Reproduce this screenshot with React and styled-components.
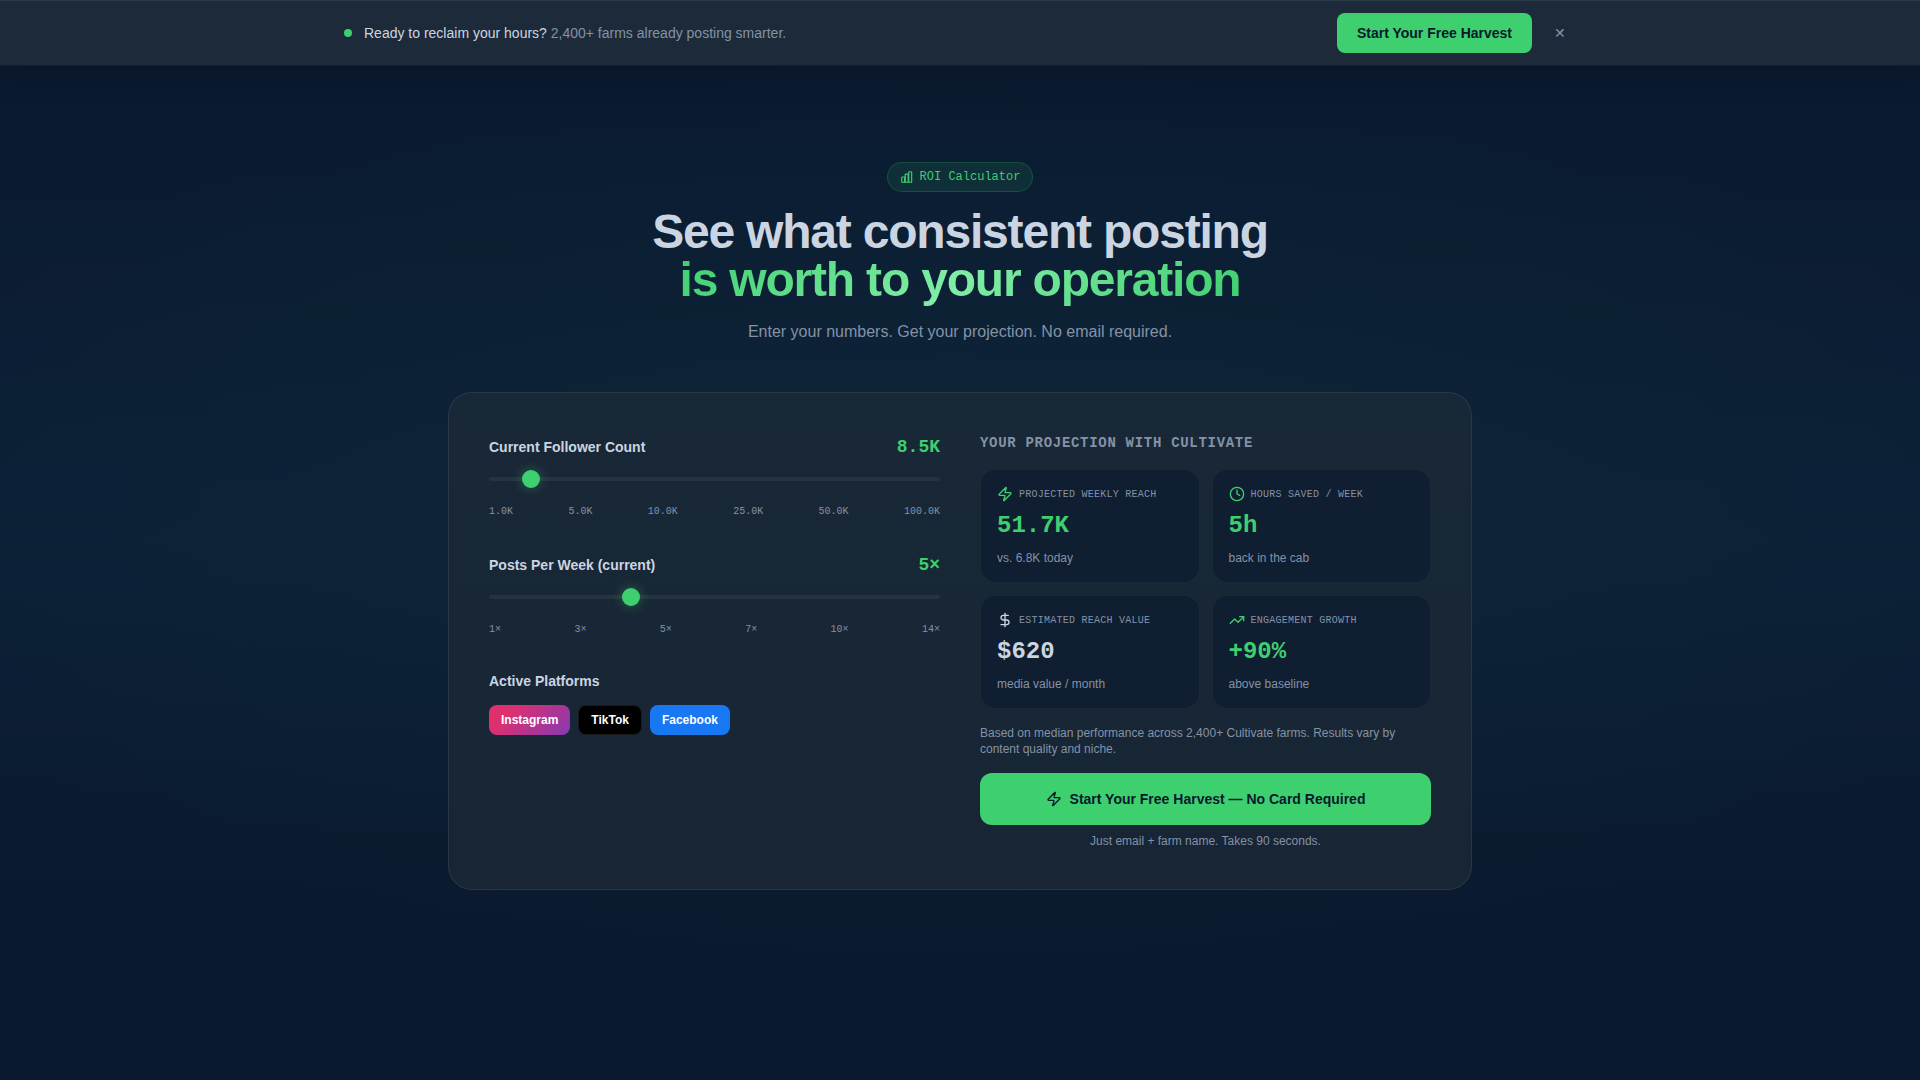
import { useState } from "react";
import styled, { createGlobalStyle, css } from "styled-components";
import { Clock, DollarSign, TrendingUp, Zap } from "lucide-react";

const GlobalStyle = createGlobalStyle`
  *, *::before, *::after {
    box-sizing: border-box;
  }
  body {
    margin: 0;
    background-color: #0a192f;
    color: #cbd5e1;
    font-family: "Liberation Sans", Arial, sans-serif;
    font-size: 16px;
    line-height: 24px;
  }
  button, input {
    font-family: inherit;
  }
  h1, h2, p {
    margin: 0;
  }
`;

const mono = css`
  font-family: "Liberation Mono", "Courier New", monospace;
`;

const Page = styled.div`
  min-height: 100vh;
  background:
    radial-gradient(ellipse 60% 45% at 50% 48%, rgba(62, 207, 110, 0.04) 0%, transparent 100%),
    linear-gradient(180deg, #0a192f 0%, #0c2037 50%, #0a192f 85%);
`;

const Banner = styled.header`
  position: relative;
  border-top: 1px solid #2b3a49;
  border-bottom: 1px solid #121f2d;
  background-color: #1d2a39;
  box-shadow: 0 8px 32px rgba(0, 0, 0, 0.2);
`;
const BannerInner = styled.div`
  display: flex;
  align-items: center;
  gap: 12px;
  max-width: 1280px;
  margin: 0 auto;
  padding: 12px 24px;
`;
const Dot = styled.span`
  width: 8px;
  height: 8px;
  border-radius: 50%;
  background-color: #3ecf6e;
`;
const BannerText = styled.p`
  flex: 1;
  font-size: 14px;
  line-height: 20px;
`;
const Muted = styled.span`
  color: #8492a6;
`;
const BannerButton = styled.button`
  height: 40px;
  padding: 0 20px;
  border: 0;
  border-radius: 8px;
  background-color: #3ecf6e;
  color: #0a192f;
  font-size: 14px;
  font-weight: 700;
  cursor: pointer;
`;
const CloseButton = styled.button`
  width: 32px;
  height: 32px;
  padding: 0;
  border: 0;
  background: none;
  color: #8492a6;
  font-size: 14px;
  cursor: pointer;
`;

const Section = styled.main`
  display: flex;
  flex-direction: column;
  align-items: center;
  padding: 96px 24px;
`;
const Pill = styled.div`
  ${mono}
  display: flex;
  align-items: center;
  gap: 6px;
  margin-bottom: 16px;
  padding: 6px 12px;
  border: 1px solid rgba(62, 207, 110, 0.2);
  border-radius: 15px;
  background-color: rgba(62, 207, 110, 0.1);
  color: #3ecf6e;
  font-size: 12px;
  line-height: 16px;
`;
const Title = styled.h1`
  margin-bottom: 16px;
  color: #cbd5e1;
  font-size: 48px;
  font-weight: 700;
  line-height: 48px;
  letter-spacing: -0.025em;
  text-align: center;
`;
const Highlight = styled.span`
  background: linear-gradient(135deg, #3ecf6e 0%, #80eda6 50%, #3ecf6e 100%);
  background-clip: text;
  color: transparent;
`;
const Subtitle = styled.p`
  margin-bottom: 48px;
  color: #8492a6;
`;

const Card = styled.div`
  display: grid;
  grid-template-columns: 1fr 1fr;
  gap: 40px;
  width: 100%;
  max-width: 1024px;
  padding: 40px;
  border: 1px solid rgba(255, 255, 255, 0.08);
  border-radius: 24px;
  background: linear-gradient(180deg, #192837 0%, #172534 100%);

  @media (max-width: 800px) {
    grid-template-columns: 1fr;
  }
`;
const Controls = styled.div`
  display: flex;
  flex-direction: column;
  gap: 32px;
`;
const FieldHead = styled.div`
  display: flex;
  align-items: center;
  justify-content: space-between;
  margin-bottom: 8px;
`;
const FieldLabel = styled.label`
  color: #cbd5e1;
  font-size: 14px;
  font-weight: 700;
  line-height: 20px;
`;
const FieldValue = styled.output`
  ${mono}
  color: #3ecf6e;
  font-size: 18px;
  font-weight: 700;
  line-height: 28px;
`;
const Range = styled.input`
  display: block;
  width: 100%;
  height: 20px;
  margin: 0;
  appearance: none;
  background: none;
  cursor: pointer;

  &::-webkit-slider-runnable-track {
    height: 4px;
    border-radius: 2px;
    background-color: #253341;
  }
  &::-webkit-slider-thumb {
    width: 18px;
    height: 18px;
    margin-top: -7px;
    appearance: none;
    border-radius: 50%;
    background-color: #3ecf6e;
    box-shadow: 0 0 12px rgba(62, 207, 110, 0.4);
  }
`;
const Ticks = styled.div`
  ${mono}
  display: flex;
  justify-content: space-between;
  margin-top: 15px;
  color: #8492a6;
  font-size: 10px;
  line-height: 15px;
`;
const GroupLabel = styled.div`
  margin-bottom: 12px;
  font-size: 14px;
  font-weight: 700;
  line-height: 24px;
`;
const Platforms = styled.div`
  display: flex;
  gap: 8px;
`;
const PlatformButton = styled.button`
  padding: 6px 12px;
  border: ${({ $border }) => $border || "0"};
  border-radius: 8px;
  background: ${({ $bg }) => $bg};
  color: #fff;
  font-size: 12px;
  font-weight: 700;
  line-height: 16px;
  cursor: pointer;
`;

const ResultsTitle = styled.h2`
  ${mono}
  margin-bottom: 16px;
  color: #8492a6;
  font-size: 14px;
  font-weight: 700;
  line-height: 20px;
  letter-spacing: 0.05em;
  text-transform: uppercase;
`;
const Stats = styled.div`
  display: grid;
  grid-template-columns: 1fr 1fr;
  gap: 12px;
  margin-bottom: 16px;
`;
const Stat = styled.div`
  display: flex;
  flex-direction: column;
  gap: 8px;
  padding: 16px;
  border: 1px solid rgba(255, 255, 255, 0.01);
  border-radius: 16px;
  background-color: #101e31;
  background-clip: padding-box;
`;
const StatHead = styled.div`
  ${mono}
  display: flex;
  align-items: center;
  gap: 6px;
  color: #8492a6;
  font-size: 10px;
  line-height: 15px;
  letter-spacing: 0.025em;
  text-transform: uppercase;

  svg {
    color: ${({ $color }) => $color};
  }
`;
const StatValue = styled.div`
  ${mono}
  color: ${({ $color }) => $color};
  font-size: 24px;
  font-weight: 700;
  line-height: 32px;
`;
const Small = styled.p`
  color: #8492a6;
  font-size: 12px;
  line-height: 16px;
  text-align: ${({ $center }) => ($center ? "center" : "left")};
`;
const CtaButton = styled.button`
  display: flex;
  align-items: center;
  justify-content: center;
  gap: 8px;
  width: 100%;
  margin: 16px 0 8px;
  padding: 16px;
  border: 0;
  border-radius: 12px;
  background-color: #3ecf6e;
  color: #0a192f;
  font-size: 14px;
  font-weight: 700;
  line-height: 20px;
  cursor: pointer;
`;

const GREEN = "#3ecf6e";
const LIGHT = "#cbd5e1";

const stats = [
  { icon: Zap, label: "Projected Weekly Reach", value: "51.7K", sub: "vs. 6.8K today", color: GREEN },
  { icon: Clock, label: "Hours Saved / Week", value: "5h", sub: "back in the cab", color: GREEN },
  { icon: DollarSign, label: "Estimated Reach Value", value: "$620", sub: "media value / month", color: LIGHT },
  { icon: TrendingUp, label: "Engagement Growth", value: "+90%", sub: "above baseline", color: GREEN },
];

const platforms = [
  { name: "Instagram", bg: "linear-gradient(135deg, #e1306c 0%, #dd3070 25%, #833ab4 100%)" },
  { name: "TikTok", bg: "#000", border: "1px solid rgba(255, 255, 255, 0.1)" },
  { name: "Facebook", bg: "#1877f2" },
];

const BarsIcon = () => (
  <svg width="14" height="14" viewBox="0 0 24 24" fill="none" stroke="currentColor" strokeWidth="2">
    <rect x="3" y="12" width="5" height="9" rx="1" />
    <rect x="9" y="7" width="5" height="14" rx="1" />
    <rect x="15" y="3" width="5" height="18" rx="1" />
  </svg>
);

const SliderField = ({ id, label, display, ticks, ...range }) => (
  <div>
    <FieldHead>
      <FieldLabel htmlFor={id}>{label}</FieldLabel>
      <FieldValue htmlFor={id}>{display}</FieldValue>
    </FieldHead>
    <Range id={id} type="range" {...range} />
    <Ticks>
      {ticks.map((tick) => (
        <span key={tick}>{tick}</span>
      ))}
    </Ticks>
  </div>
);

const App = () => {
  const [followers, setFollowers] = useState(8500);
  const [posts, setPosts] = useState(5);

  return (
    <>
      <GlobalStyle />
      <Page>
        <Banner>
          <BannerInner>
            <Dot />
            <BannerText>
              Ready to reclaim your hours? <Muted>2,400+ farms already posting smarter.</Muted>
            </BannerText>
            <BannerButton type="button">Start Your Free Harvest</BannerButton>
            <CloseButton type="button" aria-label="Dismiss">✕</CloseButton>
          </BannerInner>
        </Banner>
        <Section>
          <Pill>
            <BarsIcon />
            ROI Calculator
          </Pill>
          <Title>
            See what consistent posting
            <br />
            <Highlight>is worth to your operation</Highlight>
          </Title>
          <Subtitle>Enter your numbers. Get your projection. No email required.</Subtitle>
          <Card>
            <Controls>
              <SliderField
                id="followers"
                label="Current Follower Count"
                display={`${(followers / 1000).toFixed(1)}K`}
                ticks={["1.0K", "5.0K", "10.0K", "25.0K", "50.0K", "100.0K"]}
                min={1000}
                max={100000}
                step={500}
                value={followers}
                onChange={(e) => setFollowers(Number(e.target.value))}
              />
              <SliderField
                id="posts"
                label="Posts Per Week (current)"
                display={`${posts}×`}
                ticks={["1×", "3×", "5×", "7×", "10×", "14×"]}
                min={1}
                max={14}
                value={posts}
                onChange={(e) => setPosts(Number(e.target.value))}
              />
              <div role="group" aria-labelledby="platforms">
                <GroupLabel id="platforms">Active Platforms</GroupLabel>
                <Platforms>
                  {platforms.map(({ name, bg, border }) => (
                    <PlatformButton key={name} type="button" $bg={bg} $border={border}>
                      {name}
                    </PlatformButton>
                  ))}
                </Platforms>
              </div>
            </Controls>
            <div>
              <ResultsTitle>Your projection with Cultivate</ResultsTitle>
              <Stats>
                {stats.map(({ icon: Icon, label, value, sub, color }) => (
                  <Stat key={label}>
                    <StatHead $color={color}>
                      <Icon size={16} />
                      {label}
                    </StatHead>
                    <StatValue $color={color}>{value}</StatValue>
                    <Small>{sub}</Small>
                  </Stat>
                ))}
              </Stats>
              <Small>
                Based on median performance across 2,400+ Cultivate farms. Results vary by content quality and niche.
              </Small>
              <CtaButton type="button">
                <Zap size={16} />
                Start Your Free Harvest — No Card Required
              </CtaButton>
              <Small $center>Just email + farm name. Takes 90 seconds.</Small>
            </div>
          </Card>
        </Section>
      </Page>
    </>
  );
};

export default App;
